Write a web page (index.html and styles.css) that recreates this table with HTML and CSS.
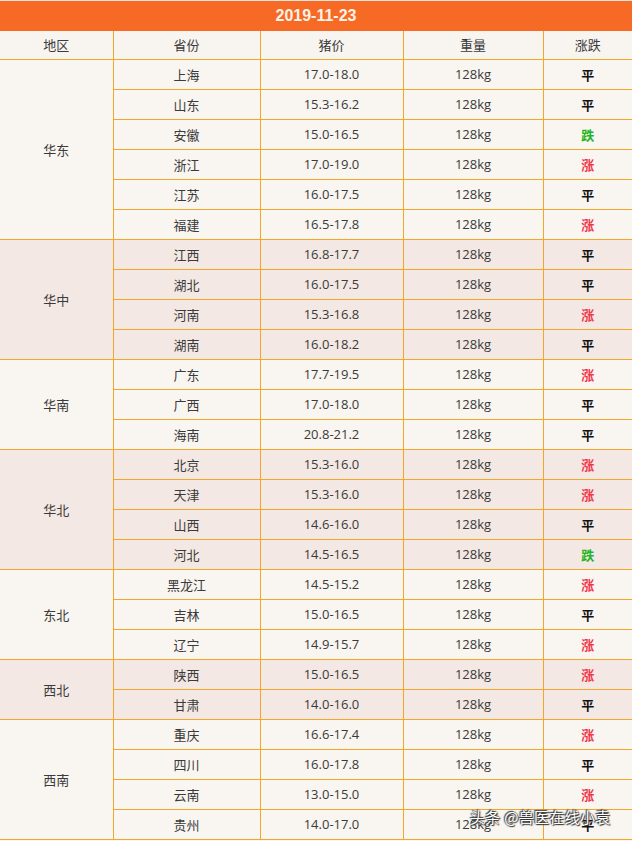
FILE: index.html
```html
<!DOCTYPE html>
<html lang="zh">
<head>
<meta charset="utf-8">
<title>2019-11-23 猪价</title>
<link rel="stylesheet" href="styles.css">
</head>
<body>
<div class="page">
  <div class="title">2019-11-23</div>
  <table class="prices">
    <colgroup>
      <col class="c1"><col class="c2"><col class="c3"><col class="c4"><col class="c5">
    </colgroup>
    <thead>
      <tr><th>地区</th><th>省份</th><th>猪价</th><th>重量</th><th>涨跌</th></tr>
    </thead>
    <tbody class="g-light">
      <tr><td class="region" rowspan="6">华东</td><td>上海</td><td>17.0-18.0</td><td>128kg</td><td class="flat">平</td></tr>
      <tr><td>山东</td><td>15.3-16.2</td><td>128kg</td><td class="flat">平</td></tr>
      <tr><td>安徽</td><td>15.0-16.5</td><td>128kg</td><td class="down">跌</td></tr>
      <tr><td>浙江</td><td>17.0-19.0</td><td>128kg</td><td class="up">涨</td></tr>
      <tr><td>江苏</td><td>16.0-17.5</td><td>128kg</td><td class="flat">平</td></tr>
      <tr><td>福建</td><td>16.5-17.8</td><td>128kg</td><td class="up">涨</td></tr>
    </tbody>
    <tbody class="g-pink">
      <tr><td class="region" rowspan="4">华中</td><td>江西</td><td>16.8-17.7</td><td>128kg</td><td class="flat">平</td></tr>
      <tr><td>湖北</td><td>16.0-17.5</td><td>128kg</td><td class="flat">平</td></tr>
      <tr><td>河南</td><td>15.3-16.8</td><td>128kg</td><td class="up">涨</td></tr>
      <tr><td>湖南</td><td>16.0-18.2</td><td>128kg</td><td class="flat">平</td></tr>
    </tbody>
    <tbody class="g-light">
      <tr><td class="region" rowspan="3">华南</td><td>广东</td><td>17.7-19.5</td><td>128kg</td><td class="up">涨</td></tr>
      <tr><td>广西</td><td>17.0-18.0</td><td>128kg</td><td class="flat">平</td></tr>
      <tr><td>海南</td><td>20.8-21.2</td><td>128kg</td><td class="flat">平</td></tr>
    </tbody>
    <tbody class="g-pink">
      <tr><td class="region" rowspan="4">华北</td><td>北京</td><td>15.3-16.0</td><td>128kg</td><td class="up">涨</td></tr>
      <tr><td>天津</td><td>15.3-16.0</td><td>128kg</td><td class="up">涨</td></tr>
      <tr><td>山西</td><td>14.6-16.0</td><td>128kg</td><td class="flat">平</td></tr>
      <tr><td>河北</td><td>14.5-16.5</td><td>128kg</td><td class="down">跌</td></tr>
    </tbody>
    <tbody class="g-light">
      <tr><td class="region" rowspan="3">东北</td><td>黑龙江</td><td>14.5-15.2</td><td>128kg</td><td class="up">涨</td></tr>
      <tr><td>吉林</td><td>15.0-16.5</td><td>128kg</td><td class="flat">平</td></tr>
      <tr><td>辽宁</td><td>14.9-15.7</td><td>128kg</td><td class="up">涨</td></tr>
    </tbody>
    <tbody class="g-pink">
      <tr><td class="region" rowspan="2">西北</td><td>陕西</td><td>15.0-16.5</td><td>128kg</td><td class="up">涨</td></tr>
      <tr><td>甘肃</td><td>14.0-16.0</td><td>128kg</td><td class="flat">平</td></tr>
    </tbody>
    <tbody class="g-light">
      <tr><td class="region" rowspan="4">西南</td><td>重庆</td><td>16.6-17.4</td><td>128kg</td><td class="up">涨</td></tr>
      <tr><td>四川</td><td>16.0-17.8</td><td>128kg</td><td class="flat">平</td></tr>
      <tr><td>云南</td><td>13.0-15.0</td><td>128kg</td><td class="up">涨</td></tr>
      <tr><td>贵州</td><td>14.0-17.0</td><td>128kg</td><td class="flat">平</td></tr>
    </tbody>
  </table>
  <div class="watermark">头条 @兽医在线小袁</div>
</div>
</body>
</html>
```

FILE: styles.css
```css
html, body {
  margin: 0;
  padding: 0;
  background: #f9f5f1;
}

.page {
  position: relative;
  width: 632px;
  font-family: "Open Sans", "Noto Sans CJK SC", sans-serif;
  color: #3a3a3a;
}

.title {
  box-sizing: border-box;
  height: 31px;
  border-top: 1px solid #efe2da;
  background: #f76a25;
  color: #fdf3e8;
  font-family: "Liberation Sans", "Noto Sans CJK SC", sans-serif;
  font-weight: bold;
  font-size: 16px;
  line-height: 30px;
  text-align: center;
}

.prices {
  width: 632px;
  table-layout: fixed;
  border-collapse: collapse;
  font-size: 13px;
}

.c1 { width: 113px; }
.c2 { width: 147px; }
.c3 { width: 143px; }
.c4 { width: 140px; }
.c5 { width: 89px; }

.prices th,
.prices td {
  padding: 0;
  text-align: center;
  border: 1px solid #f3a627;
  font-weight: normal;
  white-space: nowrap;
}

.prices tr > :first-child { border-left: none; }
.prices tr > :last-child { border-right: none; }
.prices thead th { border-top: none; }

.prices thead tr { height: 28px; }
.prices tbody tr { height: 30px; }

.prices thead th {
  background: #f8f4f0;
}

.g-light td { background: #f9f5f1; }
.g-pink td { background: #f3e8e3; }

.flat, .up, .down {
  font-weight: bold !important;
  font-family: "Noto Sans CJK SC", sans-serif;
}
.flat { color: #111; }
.up { color: #f0364c; }
.down { color: #22b522; }

.watermark {
  position: absolute;
  left: 470px;
  top: 806px;
  font-family: "Noto Sans CJK SC", sans-serif;
  font-size: 15px;
  color: #ffffff;
  letter-spacing: 0.3px;
  text-shadow: 0 0 2px #222, 1px 1px 1px #333, -1px -1px 1px #444;
}
```
